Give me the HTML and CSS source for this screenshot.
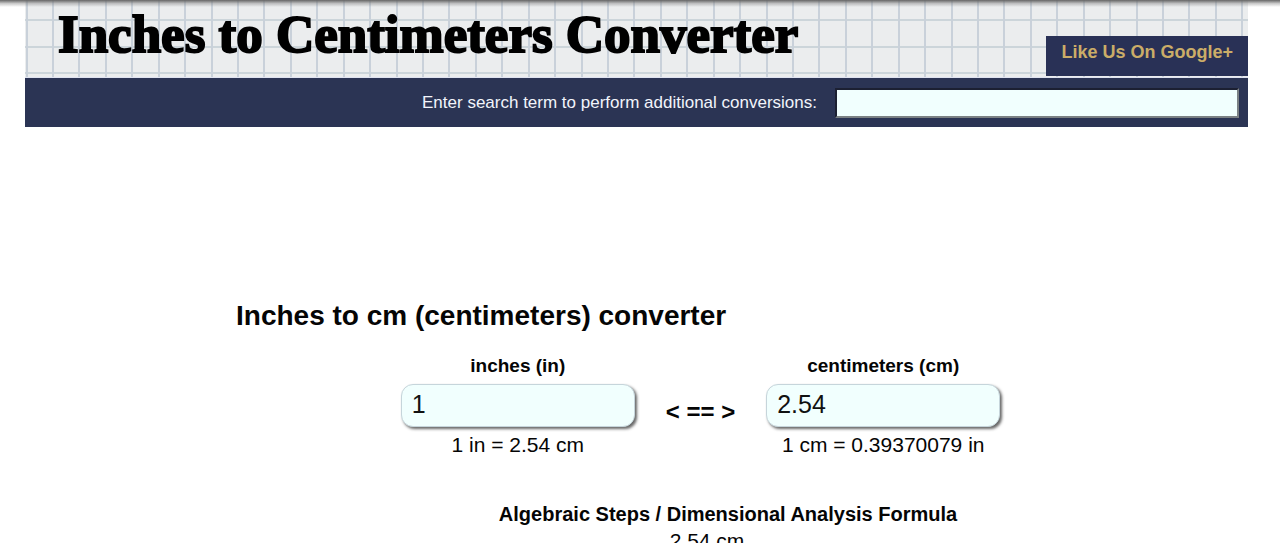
FILE: index.html
```
<!DOCTYPE html>
<html lang="en">
<head>
<meta charset="utf-8">
<title>Inches to Centimeters Converter</title>
<link rel="stylesheet" href="styles.css">
</head>
<body>
<div class="page">
  <header class="banner">
    <h1 class="site-title">Inches to Centimeters Converter</h1>
    <a class="like-link" href="#">Like Us On Google+</a>
  </header>
  <form class="search">
    <label for="search-term">Enter search term to perform additional conversions:</label>
    <input class="search-box" id="search-term" type="text">
  </form>
  <main class="content">
    <h2 class="heading">Inches to cm (centimeters) converter</h2>
    <form class="converter">
      <div class="unit">
        <label for="inches">inches (in)</label>
        <input class="value" id="inches" type="text" value="1">
        <p class="rate">1 in = 2.54 cm</p>
      </div>
      <span class="arrow">&lt; == &gt;</span>
      <div class="unit">
        <label for="centimeters">centimeters (cm)</label>
        <input class="value" id="centimeters" type="text" value="2.54">
        <p class="rate">1 cm = 0.39370079 in</p>
      </div>
    </form>
    <section class="formula">
      <h3 class="formula-title">Algebraic Steps / Dimensional Analysis Formula</h3>
      <p class="fraction">2.54 cm</p>
    </section>
  </main>
</div>
</body>
</html>
```
FILE: styles.css
```
* { box-sizing: border-box; }

html { overflow: hidden; }

body {
  margin: 0;
  height: 100vh;
  overflow: hidden;
  background: #fff;
  color: #050505;
  font-family: "Liberation Sans", Arial, sans-serif;
}

h1, h2, h3, p { margin: 0; font-size: inherit; }

body::before {
  content: "";
  position: absolute;
  inset: 0 0 auto;
  height: 7px;
  background: linear-gradient(#666, rgba(120, 120, 120, 0.4) 50%, transparent);
}

.page { padding: 0 32px 0 25px; }

.banner {
  --line: #c9d1da;
  --none: transparent;
  display: flex;
  justify-content: space-between;
  height: 78px;
  border-bottom: 1px solid #dfe3f1;
  padding-left: 33px;
  background-color: #ebedee;
  background-image:
    linear-gradient(90deg,
      var(--line) 2px, var(--none) 2px 26px,
      var(--line) 26px 28px, var(--none) 28px 53px,
      var(--line) 53px 55px, var(--none) 55px 79px,
      var(--line) 79px 81px, var(--none) 81px 106px,
      var(--line) 106px 108px, var(--none) 108px 132px,
      var(--line) 132px 134px, var(--none) 134px 159px,
      var(--line) 159px 161px, var(--none) 161px),
    linear-gradient(
      #ccd5da 2px, var(--none) 2px 27px,
      #ccd5da 27px 29px, var(--none) 29px);
  background-size: 185px 100%, 100% 53px;
  background-position: 27px 0, 0 19px;
}

.site-title {
  color: #000;
  font: bold 53px/68px "Liberation Serif", "Times New Roman", serif;
  -webkit-text-stroke: 2px #000;
  white-space: nowrap;
}

.like-link {
  align-self: flex-end;
  height: 40px;
  margin-bottom: 1px;
  padding: 0 15px;
  background: #293156;
  color: #cbad68;
  font-size: 18px;
  font-weight: bold;
  line-height: 33px;
  text-decoration: none;
  white-space: nowrap;
}

.search {
  display: flex;
  align-items: center;
  justify-content: flex-end;
  gap: 18px;
  height: 49px;
  padding-right: 9px;
  background: #2b3454;
  color: #f2f4fb;
  font-size: 17px;
}

.search-box {
  width: 33%;
  min-width: 404px;
  height: 30px;
  padding: 0 8px;
  border: 2px solid;
  border-color: #1c2032 #7b8184 #7b8184 #1c2032;
  background: #f1fffe;
  font: inherit;
}

.content { padding: 172px 28px 0 211px; }

.heading { font-size: 28px; line-height: 34px; }

.converter {
  display: flex;
  justify-content: center;
  gap: 31px;
  padding: 21px 55px 0 0;
}

.unit {
  display: flex;
  flex-direction: column;
  align-items: center;
  width: 234px;
}

.unit label { font-size: 19px; font-weight: bold; line-height: 24px; }

.value {
  width: 100%;
  height: 43px;
  margin-top: 6px;
  padding: 0 10px 2px;
  border: 1px solid #c6d5db;
  border-radius: 12px;
  background: #f1fffe;
  box-shadow: 2px 2px 3px #666;
  color: #111;
  font: 25px "Liberation Sans", Arial, sans-serif;
}

.rate { padding-top: 6px; font-size: 21px; line-height: 24px; }

.arrow { padding-top: 46px; font-size: 24px; font-weight: bold; line-height: 24px; }

.formula { padding-top: 44px; text-align: center; }

.formula-title { font-size: 20px; line-height: 26px; }

.fraction { padding-right: 42px; font-size: 21px; line-height: 28px; }
```
